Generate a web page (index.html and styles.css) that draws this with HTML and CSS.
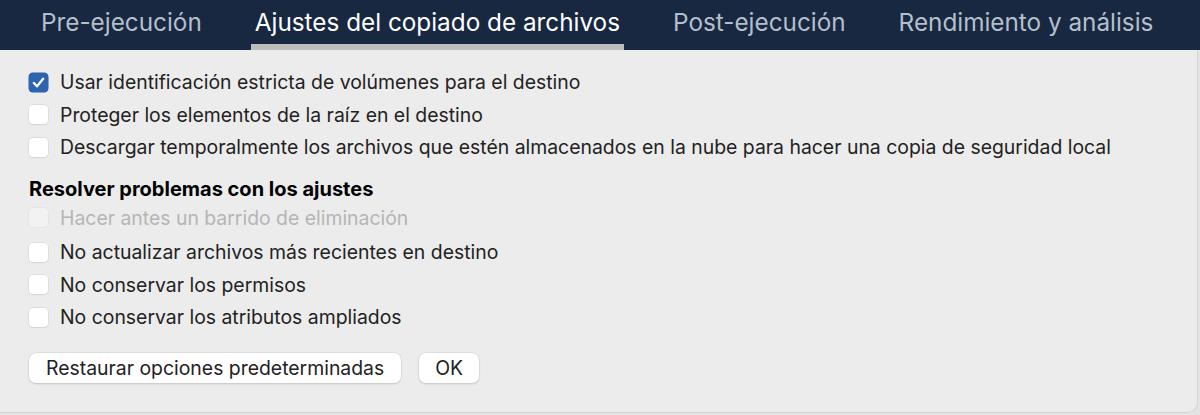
FILE: index.html
```html
<!DOCTYPE html>
<html lang="es">
<head>
    <meta charset="UTF-8">
    <meta name="viewport" content="width=device-width, initial-scale=1.0">
    <title>Ajustes del copiado de archivos</title>
    <link rel="stylesheet" href="styles.css">
</head>
<body>
    <nav class="tabs">
        <span class="tab">Pre-ejecución</span>
        <span class="tab active">Ajustes del copiado de archivos</span>
        <span class="tab">Post-ejecución</span>
        <span class="tab">Rendimiento y análisis</span>
    </nav>
    <main class="panel">
        <div class="options">
            <label class="option"><span class="box checked"><svg viewBox="0 0 18 18"><path d="M4.6 9.4 L7.6 12.6 L13.4 5.4" fill="none" stroke="#fff" stroke-width="2.2" stroke-linecap="round" stroke-linejoin="round"/></svg></span>Usar identificación estricta de volúmenes para el destino</label>
            <label class="option"><span class="box"></span>Proteger los elementos de la raíz en el destino</label>
            <label class="option"><span class="box"></span>Descargar temporalmente los archivos que estén almacenados en la nube para hacer una copia de seguridad local</label>
        </div>
        <h2 class="section-title">Resolver problemas con los ajustes</h2>
        <div class="options">
            <label class="option disabled"><span class="box"></span>Hacer antes un barrido de eliminación</label>
            <label class="option"><span class="box"></span>No actualizar archivos más recientes en destino</label>
            <label class="option"><span class="box"></span>No conservar los permisos</label>
            <label class="option"><span class="box"></span>No conservar los atributos ampliados</label>
        </div>
        <div class="buttons">
            <button class="btn">Restaurar opciones predeterminadas</button>
            <button class="btn ok">OK</button>
        </div>
    </main>
</body>
</html>
```

FILE: styles.css
```css
body {
    font-family: Inter, "Noto Sans", sans-serif;
    margin: 0;
    padding: 0;
    background-color: #e4e4e4;
    color: #222;
    height: 415px;
    overflow: hidden;
}
.tabs {
    background-color: #182840;
    height: 50px;
    display: flex;
    padding-left: 37px;
    gap: 45px;
}
.tab {
    color: #b4bfcc;
    font-size: 24.3px;
    padding: 0 4px;
    line-height: 44px;
    border-bottom: 6px solid transparent;
    white-space: nowrap;
}
.tab.active {
    color: #fff;
    border-bottom-color: #bdbdbd;
}
.panel {
    padding: 16px 0 0 29px;
    background-color: #ececec;
    border-right: 1px solid #d4d4d4;
    border-bottom: 1px solid #d4d4d4;
    height: 363px;
    box-sizing: border-box;
    border-bottom-right-radius: 10px;
    margin-right: 2px;
}
.option {
    display: flex;
    align-items: center;
    font-size: 19.4px;
    height: 32.5px;
    color: #222;
    white-space: nowrap;
}
.option.disabled {
    color: #b5b5b5;
    margin-bottom: 2px;
}
.box {
    width: 19px;
    height: 19px;
    border-radius: 4px;
    background: #fff;
    box-shadow: 0 0 0 0.5px #cfcfcf, 0 1px 1px rgba(0,0,0,0.08);
    margin-right: 12px;
    flex: none;
    display: flex;
}
.box.checked {
    background: #2c64b2;
    box-shadow: 0 0 0 0.5px #2a5aa0;
}
.box svg {
    width: 19px;
    height: 19px;
}
.option.disabled .box {
    background: #f2f2f2;
    box-shadow: 0 0 0 0.5px #dedede;
}
.section-title {
    font-size: 20px;
    font-weight: bold;
    color: #000;
    margin: 13px 0 0;
    line-height: 24px;
}
.section-title + .options {
    margin-top: 1px;
}
.buttons {
    display: flex;
    gap: 18px;
    margin-top: 19px;
}
.btn {
    font-family: inherit;
    font-size: 19.4px;
    color: #222;
    background: #fff;
    border: none;
    border-radius: 7px;
    height: 30px;
    padding: 0 17px;
    box-shadow: 0 0 0 0.5px #d0d0d0, 0 1px 2px rgba(0,0,0,0.18);
}
.btn.ok {
    padding: 0 16px;
}
```
